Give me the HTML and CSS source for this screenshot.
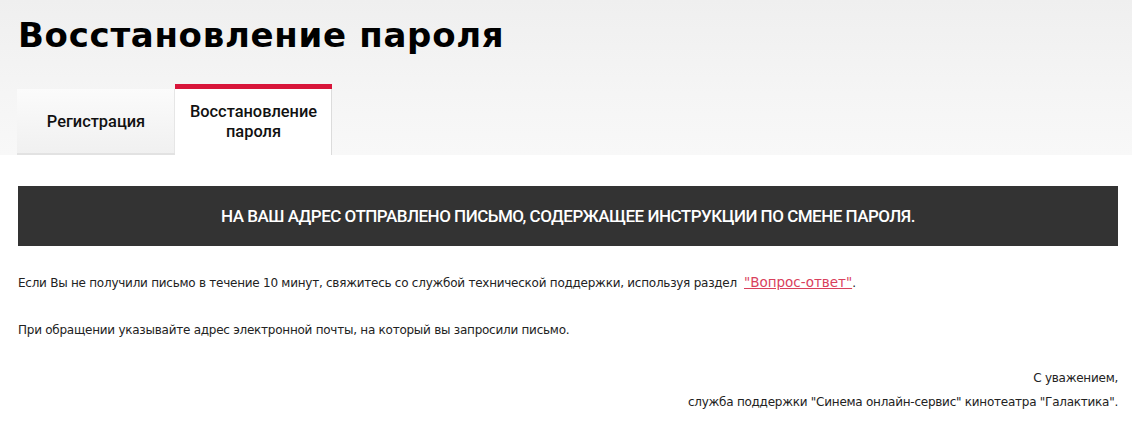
FILE: index.html
```html
<!DOCTYPE html>
<html lang="ru">
<head>
<meta charset="utf-8">
<title>Восстановление пароля</title>
<link rel="stylesheet" href="styles.css">
</head>
<body>
<div class="header">
  <div class="wrap">
    <h1 class="title">Восстановление пароля</h1>
    <div class="tabs">
      <div class="tab">Регистрация</div>
      <div class="tab tab-active">Восстановление<br>пароля</div>
    </div>
  </div>
</div>
<div class="wrap content">
  <div class="banner">На ваш адрес отправлено письмо, содержащее инструкции по смене пароля.</div>
  <p class="text">Если Вы не получили письмо в течение 10 минут, свяжитесь со службой технической поддержки, используя раздел&nbsp; <a class="link" href="#">"Вопрос-ответ"</a>.</p>
  <p class="text text-second">При обращении указывайте адрес электронной почты, на который вы запросили письмо.</p>
  <div class="signature">
    <div>С уважением,</div>
    <div>служба поддержки "Синема онлайн-сервис" кинотеатра "Галактика".</div>
  </div>
</div>
</body>
</html>
```
FILE: styles.css
```css
html, body {
  margin: 0;
  padding: 0;
  background: #ffffff;
}
body {
  font-family: "Liberation Sans", Arial, sans-serif;
  color: #1a1a1a;
}
.wrap {
  margin-left: 18px;
  width: 1100px;
}
.header {
  background: linear-gradient(to bottom, #efefef 0%, #f5f5f5 60%, #f8f8f8 100%);
  height: 155px;
  padding-top: 15px;
  box-sizing: border-box;
}
.title {
  margin: 0;
  font-family: "DejaVu Sans", sans-serif;
  font-size: 34px;
  line-height: 40px;
  font-weight: bold;
  letter-spacing: 0.7px;
  color: #000;
}
.tabs {
  display: flex;
  align-items: flex-end;
  margin-top: 29px;
  margin-left: -1px;
}
.tab {
  display: flex;
  align-items: center;
  justify-content: center;
  text-align: center;
  width: 158px;
  height: 66px;
  box-sizing: border-box;
  font-family: "Roboto", sans-serif;
  font-weight: 500;
  font-size: 16.4px;
  line-height: 20px;
  color: #111;
  background: linear-gradient(to bottom, #fbfbfb 0%, #f0f0f0 100%);
  box-shadow: inset 0 -2px 0 #e2e2e2, inset -1px 0 0 #e6e6e6;
}
.tab-active {
  width: 157px;
  height: 71px;
  background: #ffffff;
  border-top: 5px solid #d8153a;
  box-shadow: inset -1px 0 0 #dcdcdc;
}
.content {
  padding-bottom: 20px;
}
.banner {
  margin-top: 31px;
  height: 60px;
  background: #333333;
  color: #ffffff;
  display: flex;
  align-items: center;
  justify-content: center;
  font-family: "Roboto", sans-serif;
  font-weight: 500;
  font-size: 17px;
  letter-spacing: -0.5px;
  text-transform: uppercase;
}
.text {
  margin: 27px 0 0 0;
  font-family: "DejaVu Sans", sans-serif;
  font-size: 12px;
  line-height: 20px;
  letter-spacing: -0.25px;
  color: #222;
}
.link {
  color: #d9405c;
  font-size: 13.5px;
  line-height: 1;
  letter-spacing: 0;
  text-decoration: underline;
}
.signature {
  margin-top: 26px;
  text-align: right;
  font-family: "DejaVu Sans", sans-serif;
  font-size: 12px;
  line-height: 24px;
  letter-spacing: -0.25px;
  color: #222;
}
```
